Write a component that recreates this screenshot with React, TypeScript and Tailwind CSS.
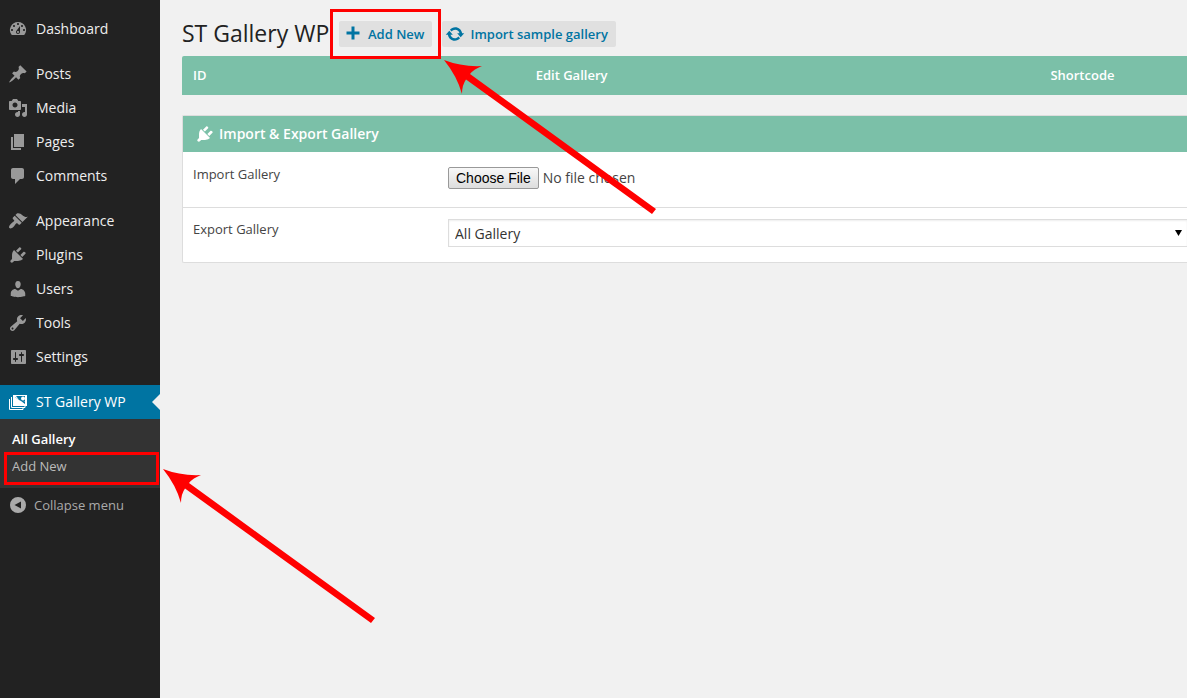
import React from "react";

const icons = {
  dashboard:
    "M3.76 16h12.48A7.998 7.998 0 0 0 10 3a7.998 7.998 0 0 0-6.24 13zM10 4c.55 0 1 .45 1 1s-.45 1-1 1-1-.45-1-1 .45-1 1-1zM6 6c.55 0 1 .45 1 1s-.45 1-1 1-1-.45-1-1 .45-1 1-1zm8 0c.55 0 1 .45 1 1s-.45 1-1 1-1-.45-1-1 .45-1 1-1zm-5.37 5.55L12 7v6c0 1.1-.9 2-2 2s-2-.9-2-2c0-.57.24-1.08.63-1.45zM4 10c.55 0 1 .45 1 1s-.45 1-1 1-1-.45-1-1 .45-1 1-1zm12 0c.55 0 1 .45 1 1s-.45 1-1 1-1-.45-1-1 .45-1 1-1zm-5 3c0-.55-.45-1-1-1s-1 .45-1 1 .45 1 1 1 1-.45 1-1z",
  posts:
    "M10.44 3.02l1.82-1.82 6.36 6.35-1.83 1.82c-1.05-.68-2.48-.57-3.41.36l-.75.75c-.92.93-1.04 2.35-.35 3.41l-1.83 1.82-2.41-2.41-2.8 2.79c-.42.42-3.38 2.71-3.8 2.29s1.86-3.39 2.28-3.81l2.79-2.79L4.1 9.36l1.83-1.82c1.05.69 2.48.57 3.4-.36l.75-.75c.93-.92 1.05-2.35.36-3.41z",
  media:
    "M13 11V4c0-.55-.45-1-1-1h-1.67L9 1H5L3.67 3H2c-.55 0-1 .45-1 1v7c0 .55.45 1 1 1h10c.55 0 1-.45 1-1zM7 4.5c1.38 0 2.5 1.12 2.5 2.5S8.38 9.5 7 9.5 4.5 8.38 4.5 7 5.62 4.5 7 4.5zM14 6h5v10.5c0 1.38-1.12 2.5-2.5 2.5S14 17.88 14 16.5s1.12-2.5 2.5-2.5c.17 0 .34.02.5.05V9h-3V6zm-4 8.05V13h2v3.5c0 1.38-1.12 2.5-2.5 2.5S7 17.88 7 16.5 8.12 14 9.5 14c.17 0 .34.02.5.05z",
  pages: "M6 15V2h10v13H6zm-1 1h8v2H3V5h2v11z",
  comments:
    "M5 2h9c1.1 0 2 .9 2 2v7c0 1.1-.9 2-2 2h-2l-5 5v-5H5c-1.1 0-2-.9-2-2V4c0-1.1.9-2 2-2z",
  appearance:
    "M14.48 11.06L7.41 3.99l1.5-1.5c.5-.56 2.3-.47 3.51.32 1.21.8 1.43 1.28 2.91 2.1 1.18.64 2.45 1.26 4.45.85zm-.71.71L6.7 4.7 4.93 6.47c-.39.39-.39 1.02 0 1.41l1.06 1.06c.39.39.39 1.03 0 1.42-.6.6-1.43 1.11-2.21 1.69-.35.26-.7.53-1.01.84C1.43 14.23.4 16.08 1.4 17.07c.99 1 2.84-.03 4.18-1.36.31-.31.58-.66.85-1.02.57-.78 1.08-1.61 1.69-2.21.39-.39 1.02-.39 1.41 0l1.06 1.06c.39.39 1.02.39 1.41 0z",
  plugins:
    "M13.11 4.36L9.87 7.6 8 5.73l3.24-3.24c.35-.34 1.05-.2 1.56.32.52.51.66 1.21.31 1.55zm-8 1.77l.91-1.12 9.01 9.01-1.19.84c-.71.71-2.63 1.16-3.82 1.16H6.14L4.9 17.26c-.59.59-1.54.59-2.12 0-.59-.58-.59-1.53 0-2.12l1.24-1.24v-3.88c0-1.13.4-3.19 1.09-3.89zm7.26 3.97l3.24-3.24c.34-.35 1.04-.21 1.55.31.52.51.66 1.21.31 1.55l-3.24 3.25z",
  users:
    "M10 9.25c-2.27 0-2.73-3.44-2.73-3.44C7 4.02 7.82 2 9.97 2c2.16 0 2.98 2.02 2.71 3.81 0 0-.41 3.44-2.68 3.44zm0 2.57L12.72 10c2.39 0 4.52 2.33 4.52 4.53v2.49s-3.65 1.13-7.24 1.13c-3.65 0-7.24-1.13-7.24-1.13v-2.49c0-2.25 1.94-4.48 4.47-4.48z",
  tools:
    "M16.68 9.77c-1.34 1.34-3.3 1.67-4.95.99l-5.41 6.52c-.99.99-2.59.99-3.58 0s-.99-2.59 0-3.57l6.52-5.42c-.68-1.65-.35-3.61.99-4.95 1.28-1.28 3.12-1.62 4.72-1.06l-2.89 2.89 2.82 2.82 2.86-2.87c.53 1.58.18 3.39-1.08 4.65zM3.81 16.21c.4.39 1.04.39 1.43 0 .4-.4.4-1.04 0-1.43-.39-.4-1.03-.4-1.43 0-.39.39-.39 1.03 0 1.43z",
  settings:
    "M18 16V4c0-.55-.45-1-1-1H4c-.55 0-1 .45-1 1v12c0 .55.45 1 1 1h13c.55 0 1-.45 1-1zM8 11h1c.55 0 1 .45 1 1s-.45 1-1 1H8v1.5c0 .28-.22.5-.5.5s-.5-.22-.5-.5V13H6c-.55 0-1-.45-1-1s.45-1 1-1h1V5.5c0-.28.22-.5.5-.5s.5.22.5.5V11zm5-2h-1c-.55 0-1-.45-1-1s.45-1 1-1h1V5.5c0-.28.22-.5.5-.5s.5.22.5.5V7h1c.55 0 1 .45 1 1s-.45 1-1 1h-1v5.5c0 .28-.22.5-.5.5s-.5-.22-.5-.5V9z",
  update:
    "M10.2 3.28c3.53 0 6.43 2.61 6.92 6h2.08l-3.5 4-3.5-4h2.32c-.45-1.97-2.21-3.45-4.32-3.45-1.45 0-2.73.71-3.54 1.78L4.95 5.66C6.23 4.2 8.11 3.28 10.2 3.28zm-.4 13.44c-3.52 0-6.43-2.61-6.92-6H.8l3.5-4c1.17 1.33 2.33 2.67 3.5 4H5.48c.45 1.97 2.21 3.45 4.32 3.45 1.45 0 2.73-.71 3.54-1.78l1.71 1.95c-1.28 1.46-3.15 2.38-5.25 2.38z",
  plus: "M8.500 2.500h3v5h5v3h-5v5h-3v-5h-5v-3h5z",
  collapse: "M10 2a8 8 0 1 0 0 16 8 8 0 0 0 0-16zm3 4.500v7L6.500 10z",
};

type IconName = keyof typeof icons;

function Icon({ name, className = "" }: { name: IconName; className?: string }) {
  return (
    <svg viewBox="0 0 20 20" aria-hidden="true" className={`size-5 shrink-0 fill-current ${className}`}>
      <path fillRule="evenodd" d={icons[name]} />
    </svg>
  );
}

function GalleryIcon() {
  return (
    <svg viewBox="0 0 20 20" aria-hidden="true" className="size-5 shrink-0">
      <path d="M1.5 7v10.5H15V16M3.5 5v10.5H17V14" fill="none" stroke="#fff" />
      <path fill="#fff" fillRule="evenodd" d="M5 3h14v11H5zM7 5v7h10V9.500L13 9z" />
      <path fill="#0074a2" d="M8 4h9v5l-2 1-3-1z" />
      <path fill="#fff" d="M7 5l4 3 2 1 4 3H7z" />
      <circle cx="15" cy="6.500" r="2" fill="#fff" />
    </svg>
  );
}

const groups: { icon: IconName; label: string }[][] = [
  [{ icon: "dashboard", label: "Dashboard" }],
  [
    { icon: "posts", label: "Posts" },
    { icon: "media", label: "Media" },
    { icon: "pages", label: "Pages" },
    { icon: "comments", label: "Comments" },
  ],
  [
    { icon: "appearance", label: "Appearance" },
    { icon: "plugins", label: "Plugins" },
    { icon: "users", label: "Users" },
    { icon: "tools", label: "Tools" },
    { icon: "settings", label: "Settings" },
  ],
];

function Sidebar() {
  return (
    <nav aria-label="Admin menu" className="w-40 shrink-0 bg-[#222] pt-3 text-sm text-[#eee]">
      {groups.map((group) => (
        <ul key={group[0].label} className="mb-[11px]">
          {group.map((item) => (
            <li key={item.label}>
              <a href="#" className="flex h-[34px] items-center gap-2 pl-2">
                <Icon name={item.icon} className="text-[#999]" />
                {item.label}
              </a>
            </li>
          ))}
        </ul>
      ))}
      <a href="#" className="relative flex h-[34px] items-center gap-2 bg-[#0074a2] pl-2 text-white">
        <GalleryIcon />
        ST Gallery WP
        <span className="absolute top-1/2 right-0 -translate-y-1/2 border-8 border-l-0 border-transparent border-r-[#f1f1f1]" />
      </a>
      <ul className="bg-[#333] pt-[7px] pb-2 text-[13px]">
        <li>
          <a href="#" className="flex h-[27px] items-center pl-3 font-semibold text-white">
            All Gallery
          </a>
        </li>
        <li className="relative">
          <a href="#" className="flex h-[27px] items-center pl-3 text-[#bbb]">
            Add New
          </a>
          <span className="pointer-events-none absolute -top-px right-px -bottom-[5px] left-1 border-3 border-[#f00]" />
        </li>
      </ul>
      <button type="button" className="flex h-[34px] items-center gap-1.5 pl-2 text-[13px] text-[#aaa]">
        <Icon name="collapse" />
        Collapse menu
      </button>
    </nav>
  );
}

function Arrow({ className }: { className: string }) {
  return (
    <svg
      viewBox="0 0 214 156"
      aria-hidden="true"
      className={`pointer-events-none absolute h-[156px] w-[214px] fill-[#f00] ${className}`}
    >
      <path d="M0 0Q18 7 38 6Q30 9 26 14L212 149L208 154L22 19.500Q18 25 18 34Q13 16 0 0z" />
    </svg>
  );
}

export default function App() {
  return (
    <div className="relative flex min-h-screen overflow-hidden bg-[#f1f1f1] font-['Open_Sans',sans-serif] text-[#444]">
      <Sidebar />
      <main className="min-w-0 flex-1 pl-[22px]">
        <header className="flex h-14 items-start pt-[21px]">
          <h1 className="w-[157px] text-[23px] leading-6 whitespace-nowrap text-[#222]">ST Gallery WP</h1>
          <div className="flex gap-2.5 text-[13px] font-semibold text-[#0074a2]">
            <div className="relative">
              <button type="button" className="flex h-[26px] items-center gap-[5px] rounded-xs bg-[#e0e0e0] pr-2 pl-1">
                <Icon name="plus" />
                <span className="pt-px">Add New</span>
              </button>
              <span className="pointer-events-none absolute -inset-x-[9px] -inset-y-3 border-3 border-[#f00]" />
            </div>
            <button type="button" className="flex h-[26px] items-center gap-[5px] rounded-xs bg-[#e0e0e0] pr-2 pl-[3px]">
              <Icon name="update" />
              <span className="pt-px">Import sample gallery</span>
            </button>
          </div>
        </header>

        <table className="w-full table-fixed text-[13px] text-white">
          <thead>
            <tr className="h-[39px] bg-[#7bc0a8]">
              <th scope="col" className="w-[34%] rounded-tl-xs px-[11px] text-left font-semibold">ID</th>
              <th scope="col" className="w-[45%] px-3 text-left font-semibold">Edit Gallery</th>
              <th scope="col" className="w-[21%] pl-0.5 text-center font-semibold">Shortcode</th>
            </tr>
          </thead>
        </table>

        <section className="mt-5 rounded-l-xs border border-r-0 border-[#ddd] bg-white">
          <h2 className="flex h-9 items-center gap-1 bg-[#7bc0a8] pl-3 text-sm font-semibold text-white">
            <Icon name="plugins" />
            Import &amp; Export Gallery
          </h2>
          <div className="flex h-14 items-start border-b border-[#ddd] pt-3 pl-2.5">
            <label htmlFor="import-file" className="w-[255px] shrink-0 text-[13px] leading-5">
              Import Gallery
            </label>
            <input
              id="import-file"
              type="file"
              className="mt-[3px] min-w-0 flex-1 text-sm leading-[22px] file:mr-1 file:h-[22px] file:rounded-xs file:border file:border-solid file:border-[#999] file:bg-linear-to-b file:from-[#f8f8f8] file:to-[#ddd] file:px-[7px] file:font-['Liberation_Sans',sans-serif] file:text-sm file:leading-5 file:text-black"
            />
          </div>
          <div className="flex h-[54px] items-start pt-[11px] pl-2.5">
            <label htmlFor="export-gallery" className="w-[255px] shrink-0 text-[13px] leading-5">
              Export Gallery
            </label>
            <div className="relative min-w-0 flex-1">
              <select
                id="export-gallery"
                className="block h-7 w-full appearance-none border border-r-0 border-[#ddd] bg-white pt-0.5 pl-1.5 text-sm text-[#333] shadow-[inset_0_1px_2px_rgba(0,0,0,0.07)]"
              >
                <option>All Gallery</option>
              </select>
              <svg viewBox="0 0 7 6" aria-hidden="true" className="pointer-events-none absolute top-[11px] right-[5px] h-1.5 w-[7px]">
                <path d="M0 0h7L3.500 6z" />
              </svg>
            </div>
          </div>
        </section>
      </main>
      <Arrow className="top-[60px] left-[444px]" />
      <Arrow className="top-[469px] left-[163px]" />
    </div>
  );
}
